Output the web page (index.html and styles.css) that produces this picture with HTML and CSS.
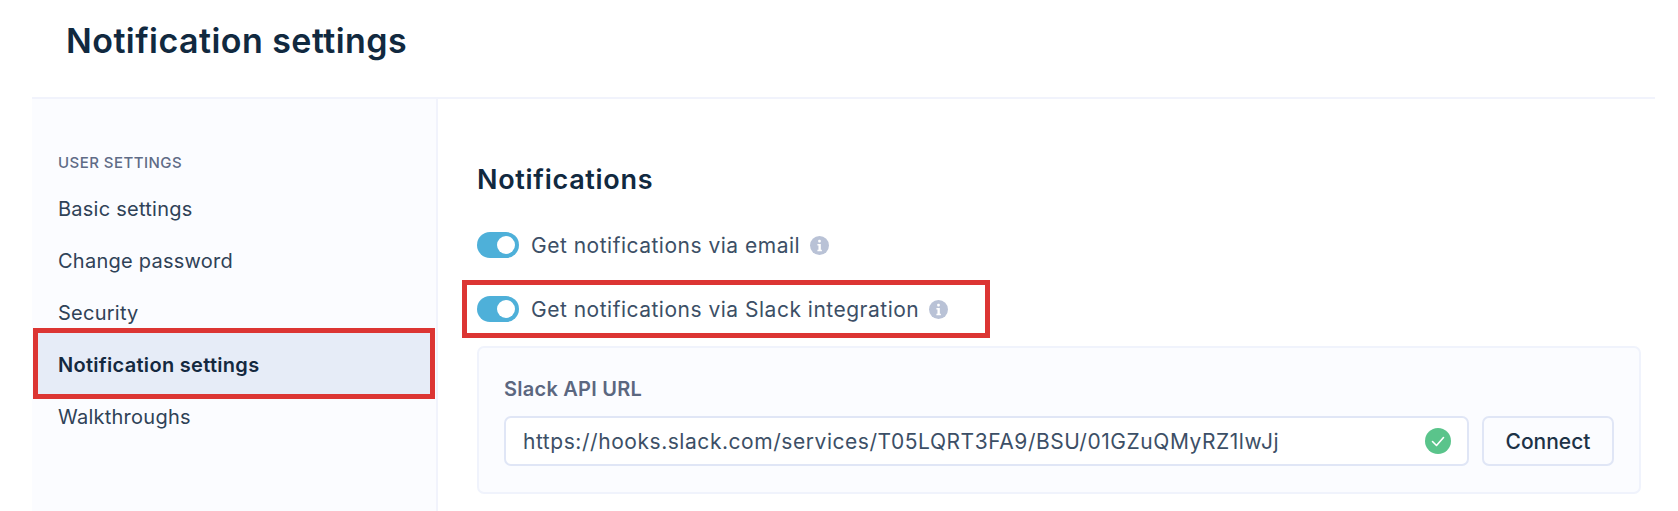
FILE: index.html
```html
<!DOCTYPE html>
<html lang="en">
<head>
<meta charset="utf-8">
<title>Notification settings</title>
<link rel="stylesheet" href="styles.css">
</head>
<body>
<header class="page-header"><h1>Notification settings</h1></header>
<main class="layout">
  <nav class="sidebar">
    <div class="nav-title">USER SETTINGS</div>
    <a class="nav-item">Basic settings</a>
    <a class="nav-item">Change password</a>
    <a class="nav-item">Security</a>
    <a class="nav-item active"><span class="nav-label">Notification settings</span></a>
    <a class="nav-item">Walkthroughs</a>
  </nav>
  <section class="content">
    <h2>Notifications</h2>
    <div class="toggle-row first">
      <span class="toggle"><span class="knob"></span></span>
      <span class="toggle-label">Get notifications via email</span>
      <svg class="info" viewBox="0 0 20 20"><circle cx="10" cy="10" r="10" fill="#b9c2d6"/><rect x="8.6" y="4" width="2.8" height="2.8" rx="1" fill="#fff"/><path d="M7.8 8.4h3.6v6h1.1v1.6H7.800v-1.600h1.100V10H7.800z" fill="#fff"/></svg>
    </div>
    <div class="toggle-row marked">
      <span class="toggle"><span class="knob"></span></span>
      <span class="toggle-label">Get notifications via Slack integration</span>
      <svg class="info" viewBox="0 0 20 20"><circle cx="10" cy="10" r="10" fill="#b9c2d6"/><rect x="8.6" y="4" width="2.8" height="2.8" rx="1" fill="#fff"/><path d="M7.8 8.4h3.6v6h1.1v1.6H7.800v-1.600h1.100V10H7.800z" fill="#fff"/></svg>
    </div>
    <div class="panel">
      <div class="field-label">Slack API URL</div>
      <div class="field-row">
        <div class="input">
          <span class="input-text">https://hooks.slack.com/services/T05LQRT3FA9/BSU/01GZuQMyRZ1lwJj</span>
          <svg class="check" viewBox="0 0 26 26"><circle cx="13" cy="13" r="13" fill="#5ac48b"/><path d="M7.500 13.500l4 4 7-8" fill="none" stroke="#fff" stroke-width="1.600" stroke-linecap="round" stroke-linejoin="round"/></svg>
        </div>
        <button class="connect">Connect</button>
      </div>
    </div>
  </section>
</main>
</body>
</html>
```
FILE: styles.css
```css
* { box-sizing: border-box; }
html, body { height: 100%; }
body {
  margin: 0;
  height: 511px;
  overflow: hidden;
  background: #fff;
  font-family: Inter, "Liberation Sans", sans-serif;
  color: #2b3f55;
}
.page-header {
  height: 97px;
  padding: 21px 0 0 66px;
}
h1 {
  margin: 0;
  font-size: 34px;
  line-height: 39px;
  letter-spacing: 0.450px;
  font-weight: 600;
  color: #11293f;
}
.layout {
  display: flex;
  height: 414px;
  margin: 0 23px 0 32px;
  border-top: 2px solid #f1f3fc;
}
.sidebar {
  width: 406px;
  flex: none;
  padding: 55px 0 0 26px;
  background: #fbfcff;
  border-right: 2px solid #f1f3fc;
}
.nav-title {
  font-size: 15px;
  line-height: 17px;
  letter-spacing: 0.450px;
  font-weight: 500;
  color: #5f6b86;
  margin-bottom: 12px;
}
.nav-item {
  display: flex;
  align-items: center;
  height: 52px;
  font-size: 20px;
  letter-spacing: 0.250px;
  color: #2f4257;
}
.nav-item.active {
  position: relative;
  font-weight: 600;
  letter-spacing: 0.300px;
  color: #14293f;
}
.nav-item.active::before {
  content: "";
  position: absolute;
  top: -11px;
  bottom: -8px;
  left: -25px;
  right: 1px;
  background: #e6ecf7;
  border: 5px solid #dc3533;
}
.nav-label { position: relative; }
.content {
  flex: 1;
  padding: 66px 15px 0 39px;
}
h2 {
  margin: 0;
  font-size: 27px;
  line-height: 29px;
  letter-spacing: 0.700px;
  font-weight: 600;
  color: #11293f;
}
.toggle-row {
  display: flex;
  align-items: center;
  height: 26px;
  font-size: 21px;
  color: #3c4f66;
}
.toggle-row.first { margin-top: 38px; }
.toggle-row.marked {
  position: relative;
  margin-top: 38px;
  margin-bottom: 24px;
}
.toggle-row.marked::after {
  content: "";
  position: absolute;
  top: -16px;
  bottom: -16px;
  left: -15px;
  width: 518px;
  border: 5px solid #dc3533;
}
.toggle {
  display: flex;
  justify-content: flex-end;
  align-items: center;
  width: 42px;
  height: 26px;
  padding-right: 4px;
  border-radius: 13px;
  background: #4eb0d9;
}
.knob {
  width: 18px;
  height: 18px;
  border-radius: 50%;
  background: #fff;
}
.toggle-label {
  margin-left: 12px;
  letter-spacing: 0.500px;
}
.info {
  width: 19px;
  height: 19px;
  margin-left: 10px;
}
.panel {
  height: 148px;
  padding: 26px 25px 0 25px;
  background: #fbfcff;
  border: 2px solid #f0f3fc;
  border-radius: 7px;
}
.field-label {
  font-size: 20px;
  line-height: 30px;
  letter-spacing: 0.250px;
  font-weight: 600;
  color: #5b6780;
}
.field-row {
  display: flex;
  gap: 13px;
  margin-top: 12px;
}
.input {
  display: flex;
  align-items: center;
  justify-content: space-between;
  flex: none;
  width: 965px;
  height: 50px;
  padding: 0 16px 0 17px;
  background: #fff;
  border: 2px solid #e0e6f6;
  border-radius: 7px;
  font-size: 21px;
  letter-spacing: 0.550px;
  color: #3c4f66;
}
.check {
  width: 26px;
  height: 26px;
}
.connect {
  width: 132px;
  height: 50px;
  padding: 0;
  background: #fbfcff;
  border: 2px solid #e0e6f6;
  border-radius: 7px;
  font-family: inherit;
  font-size: 21px;
  font-weight: 500;
  color: #1d3247;
}
```
